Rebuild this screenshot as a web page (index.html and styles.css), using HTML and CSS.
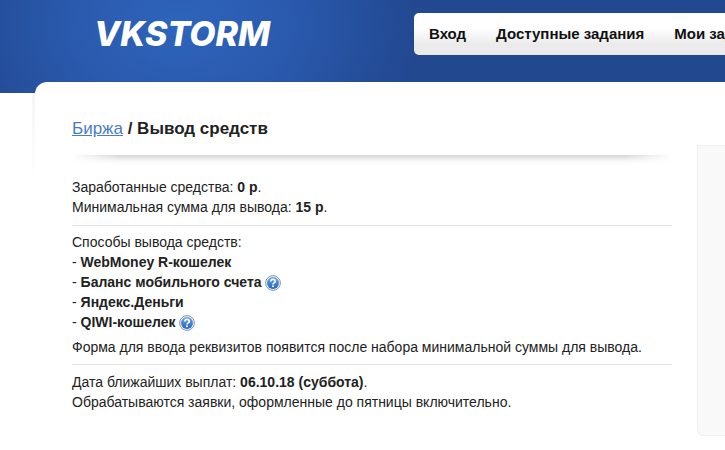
FILE: index.html
```html
<!DOCTYPE html>
<html lang="ru">
<head>
<meta charset="utf-8">
<title>VKSTORM</title>
<link rel="stylesheet" href="styles.css">
</head>
<body>
<header class="header">
  <div class="logo">VKSTORM</div>
  <nav class="nav">
    <a href="#">Вход</a>
    <a href="#">Доступные задания</a>
    <a href="#">Мои задания</a>
  </nav>
</header>
<div class="card">
  <main class="content">
    <h1 class="title"><a href="#">Биржа</a> / Вывод средств</h1>
    <div class="title-shadow"></div>
    <section class="block block-first">
      Заработанные средства: <b>0 р</b>.<br>
      Минимальная сумма для вывода: <b>15 р</b>.
    </section>
    <section class="block block-methods">
      Способы вывода средств:<br>
      - <b>WebMoney R-кошелек</b><br>
      - <b>Баланс мобильного счета</b> <svg class="help" viewBox="0 0 16 16"><defs><linearGradient id="g1" x1="0" y1="0" x2="0" y2="1"><stop offset="0" stop-color="#6fa6e4"/><stop offset="1" stop-color="#1f66bd"/></linearGradient></defs><circle cx="8" cy="8" r="7.4" fill="#eef3f8" stroke="#7f98b4" stroke-width="1"/><circle cx="8" cy="8" r="6" fill="url(#g1)"/><path d="M5.8 6.5c0-1.4 1.1-2.1 2.2-2.1s2.2.7 2.2 2c0 1.6-2.2 1.5-2.2 3" fill="none" stroke="#fff" stroke-width="1.6"/><rect x="7.15" y="10.4" width="1.7" height="1.7" fill="#fff"/></svg><br>
      - <b>Яндекс.Деньги</b><br>
      - <b>QIWI-кошелек</b> <svg class="help" viewBox="0 0 16 16"><circle cx="8" cy="8" r="7.4" fill="#eef3f8" stroke="#7f98b4" stroke-width="1"/><circle cx="8" cy="8" r="6" fill="url(#g1)"/><path d="M5.8 6.5c0-1.4 1.1-2.1 2.2-2.1s2.2.7 2.2 2c0 1.6-2.2 1.5-2.2 3" fill="none" stroke="#fff" stroke-width="1.6"/><rect x="7.15" y="10.4" width="1.7" height="1.7" fill="#fff"/></svg>
      <p class="note">Форма для ввода реквизитов появится после набора минимальной суммы для вывода.</p>
    </section>
    <section class="block">
      Дата ближайших выплат: <b>06.10.18 (суббота)</b>.<br>
      Обрабатываются заявки, оформленные до пятницы включительно.
    </section>
  </main>
  <aside class="side"></aside>
</div>
</body>
</html>
```
FILE: styles.css
```css
html, body {
  margin: 0;
  padding: 0;
  width: 725px;
  height: 450px;
  overflow: hidden;
  background: #fff;
}
body {
  font-family: "Liberation Sans", Arial, sans-serif;
  font-size: 14px;
  line-height: 20px;
  color: #222;
}
.header {
  height: 93px;
  display: flex;
  align-items: flex-start;
  background: radial-gradient(ellipse 240px 170px at 180px 25px, #2e64bc 0%, #2a5aae 45%, #224890 100%);
  background-color: #224890;
}
.logo {
  width: 414px;
  flex: none;
  box-sizing: border-box;
  padding: 14px 0 0 94px;
  font-family: Inter, Roboto, sans-serif;
  font-size: 34px;
  line-height: 40px;
  font-weight: 800;
  font-style: italic;
  color: #fff;
}
.nav {
  flex: none;
  margin-top: 13px;
  height: 42px;
  width: 311px;
  box-sizing: border-box;
  display: flex;
  gap: 30px;
  padding: 0 0 0 15px;
  align-items: center;
  overflow: hidden;
  border-radius: 5px 0 0 5px;
  background: linear-gradient(#fff 0%, #fff 35%, #ebebeb 75%, #ebebeb 100%);
  white-space: nowrap;
  font-size: 15px;
}
.nav a {
  font-weight: 700;
  color: #111;
  text-decoration: none;
}
.card {
  display: flex;
  align-items: flex-start;
  margin: -11px 0 0 35px;
  width: 720px;
  height: 380px;
  background: #fff;
  border-radius: 12px 0 0 0;
  position: relative;
}
.card::before {
  content: "";
  position: absolute;
  left: -3px;
  top: 11px;
  width: 3px;
  height: 90px;
  background: linear-gradient(rgba(0, 0, 0, 0.04), rgba(0, 0, 0, 0));
}
.content {
  flex: none;
  width: 662px;
  box-sizing: border-box;
  padding: 27px 25px 0 37px;
}
.title {
  margin: 0;
  font-size: 17px;
  line-height: 40px;
  font-weight: 700;
  color: #222;
}
.title a {
  font-weight: 400;
  color: #4a7cc4;
}
.title-shadow {
  height: 10px;
  margin-top: 6px;
  background: linear-gradient(rgba(0, 0, 0, 0.16), rgba(0, 0, 0, 0.03) 60%, rgba(0, 0, 0, 0));
  -webkit-mask-image: linear-gradient(90deg, transparent, #000 8%, #000 92%, transparent);
  mask-image: linear-gradient(90deg, transparent, #000 8%, #000 92%, transparent);
}
.block {
  padding: 7px 0 7px;
  border-top: 1px solid #e4e4e4;
}
.block-first {
  border-top: 0;
  padding-top: 12px;
  padding-bottom: 8px;
}
.block-methods {
  padding-top: 6px;
}
.note {
  margin: 5px 0 0;
}
.help {
  width: 16px;
  height: 16px;
  vertical-align: -4px;
}
.side {
  flex: none;
  width: 60px;
  height: 291px;
  margin-top: 63px;
  box-sizing: border-box;
  background: #f9f9f9;
  border: 1px solid #f0f0f0;
  border-right: 0;
  border-radius: 0 0 0 6px;
}
```
